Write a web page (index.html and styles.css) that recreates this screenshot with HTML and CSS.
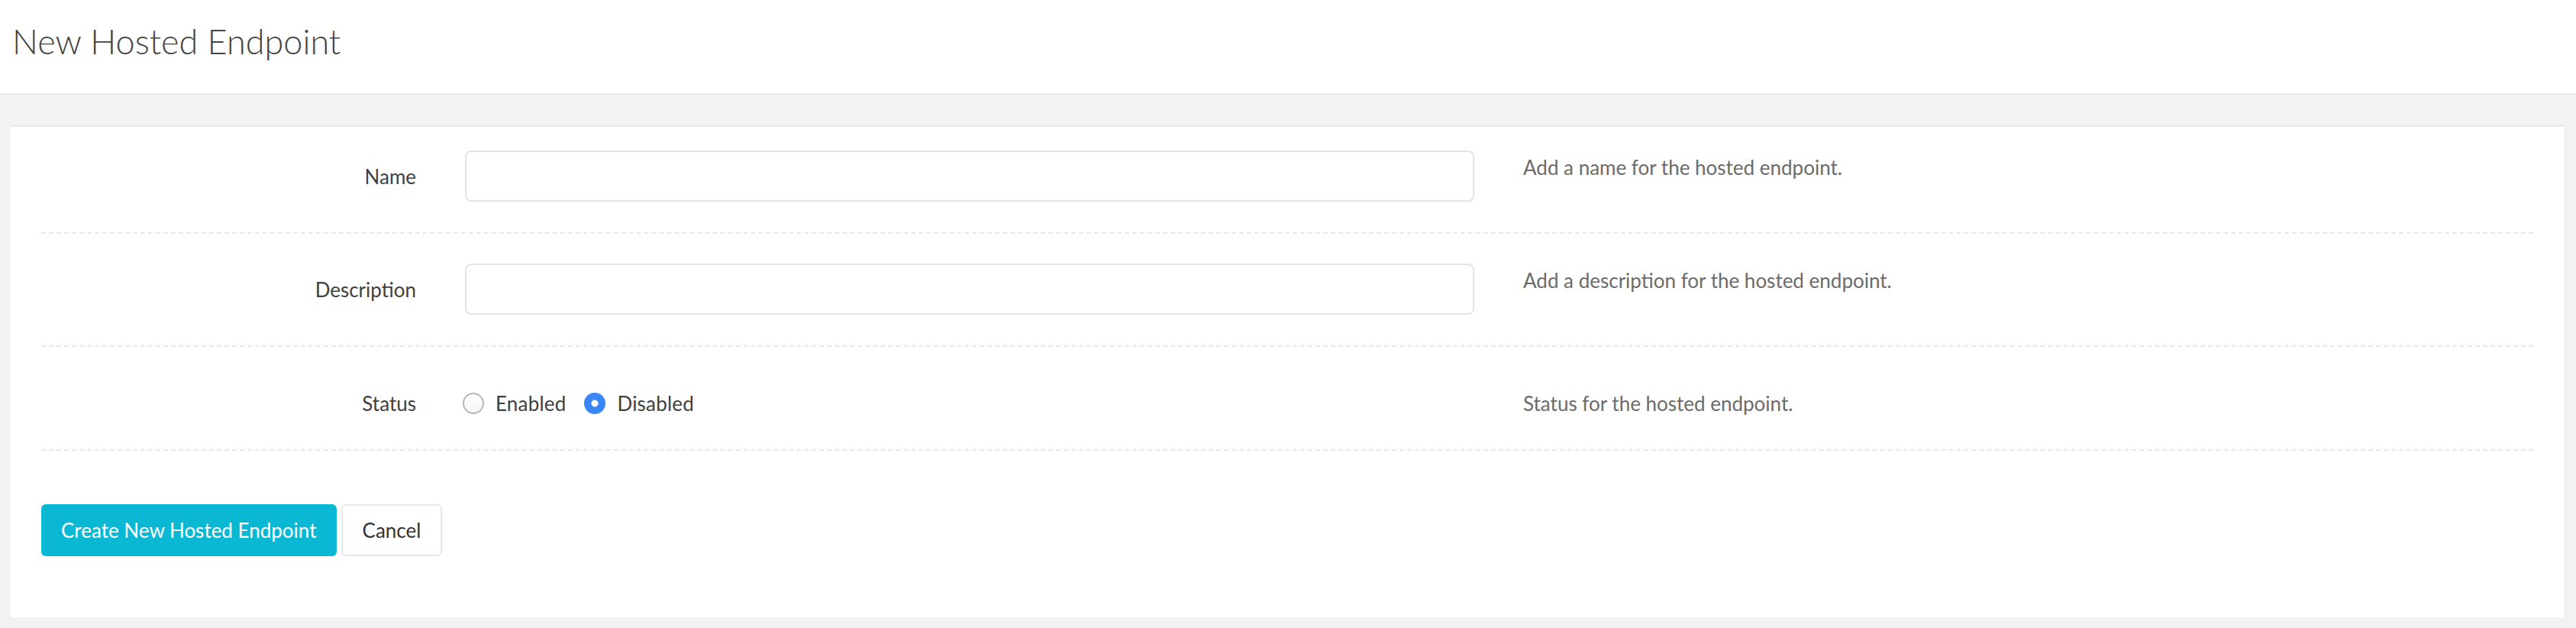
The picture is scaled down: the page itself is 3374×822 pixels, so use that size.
FILE: index.html
```html
<!DOCTYPE html>
<html lang="en">
<head>
    <meta charset="UTF-8">
    <meta name="viewport" content="width=device-width, initial-scale=1.0">
    <title>New Hosted Endpoint</title>
    <link rel="stylesheet" href="styles.css">
</head>
<body>
    <header class="page-header">
        <h1>New Hosted Endpoint</h1>
    </header>

    <main class="page-body">
        <div class="panel">
            <form class="endpoint-form">
                <!-- Name -->
                <div class="form-row first">
                    <label class="row-label" for="endpoint-name">Name</label>
                    <input type="text" id="endpoint-name" class="text-input">
                    <p class="row-help">Add a name for the hosted endpoint.</p>
                </div>

                <!-- Description -->
                <div class="form-row">
                    <label class="row-label" for="endpoint-description">Description</label>
                    <input type="text" id="endpoint-description" class="text-input">
                    <p class="row-help">Add a description for the hosted endpoint.</p>
                </div>

                <!-- Status -->
                <div class="form-row status-row">
                    <span class="row-label">Status</span>
                    <div class="radio-group">
                        <label class="radio-option">
                            <input type="radio" name="status" value="enabled">
                            <span>Enabled</span>
                        </label>
                        <label class="radio-option">
                            <input type="radio" name="status" value="disabled" checked>
                            <span>Disabled</span>
                        </label>
                    </div>
                    <p class="row-help">Status for the hosted endpoint.</p>
                </div>

                <div class="form-actions">
                    <button type="button" class="btn btn-primary">Create New Hosted Endpoint</button>
                    <button type="button" class="btn btn-default">Cancel</button>
                </div>
            </form>
        </div>
    </main>
</body>
</html>
```

FILE: styles.css
```css
:root {
    --text: #404040;
    --muted: #6b6b6b;
    --line: #e6e9ec;
    --page-bg: #f2f2f2;
    --primary: #0bb8d4;
    --radio-blue: #3b86f6;
}

* {
    box-sizing: border-box;
    font-family: 'Lato', 'Noto Sans', sans-serif;
}

body {
    margin: 0;
    padding: 0;
    background-color: var(--page-bg);
    color: var(--text);
}

.page-header {
    height: 124px;
    background: white;
    border-bottom: 2px solid var(--line);
    padding: 32px 0 0 16px;
}

.page-header h1 {
    margin: 0;
    font-size: 45px;
    font-weight: 300;
    line-height: 1;
    color: #444;
}

.page-body {
    padding: 40px 16px 12px 14px;
}

.panel {
    background: white;
    border-top: 2px solid var(--line);
    padding: 0 40px 80px;
}

.form-row {
    display: grid;
    grid-template-columns: 491px 1322px 1fr;
    column-gap: 64px;
    align-items: center;
    padding: 39px 0 40px;
    border-bottom: 2px dashed var(--line);
    font-size: 26px;
    line-height: 32px;
}

.form-row.first {
    padding-top: 31px;
}

.row-label {
    text-align: right;
}

.text-input {
    height: 67px;
    width: 100%;
    border: 2px solid #e4e4e4;
    border-radius: 8px;
    padding: 0 16px;
    font-size: 26px;
    outline: none;
}

.row-help {
    margin: 0;
    align-self: start;
    padding-top: 6px;
    color: var(--muted);
}

.status-row {
    padding: 58px 0 44px;
}

.status-row .row-help {
    padding-top: 0;
}

.radio-group {
    display: flex;
    gap: 24px;
    margin-left: -3px;
}

.radio-option {
    display: flex;
    align-items: center;
    gap: 15px;
}

.radio-option span {
    letter-spacing: 0.2px;
}

.radio-option input {
    appearance: none;
    margin: 0;
    width: 28px;
    height: 28px;
    border-radius: 50%;
    border: 2px solid #b9b9b9;
    background: linear-gradient(#fff, #f4f4f4);
}

.radio-option input:checked {
    border: none;
    background: radial-gradient(circle, #fff 0 4px, var(--radio-blue) 5px);
}

.form-actions {
    display: flex;
    gap: 6px;
    margin-top: 70px;
}

.btn {
    height: 68px;
    padding: 0 26px;
    border-radius: 6px;
    font-size: 26px;
    cursor: pointer;
}

.btn-primary {
    background-color: var(--primary);
    border: none;
    color: white;
}

.btn-default {
    background: white;
    border: 2px solid var(--line);
    color: #333;
}
```
